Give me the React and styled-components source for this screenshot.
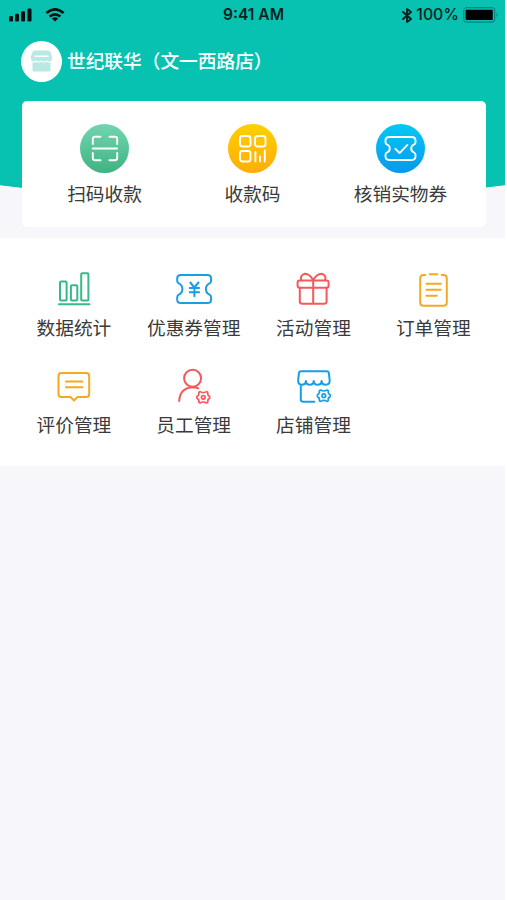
import React from 'react';
import styled, { createGlobalStyle } from 'styled-components';

const GlobalStyle = createGlobalStyle`
  * { box-sizing: border-box; }
  body { margin: 0; background: #fff; }
  svg { display: block; flex: none; }
`;

const cjk = '"Noto Sans CJK SC", sans-serif';

const Screen = styled.main`
  width: 505px;
  height: 900px;
  background: #f6f6fb;
  font-family: ${cjk};
  color: #3a3a3a;
  overflow: hidden;
`;

const Hero = styled.section`
  height: 238px;
  background:
    radial-gradient(ellipse 920px 400px at 252.5px -199px, #07c2b0 99.8%, transparent 100%);
`;

const StatusBar = styled.div`
  height: 30px;
  padding: 0 6px 0 8px;
  display: grid;
  grid-template-columns: 1fr auto 1fr;
  align-items: center;
  font: 600 16px/30px Inter, sans-serif;
  color: #04211e;
`;

const StatusGroup = styled.div`
  display: flex;
  align-items: center;
  gap: ${(p) => p.$gap}px;
  justify-content: ${(p) => (p.$end ? 'flex-end' : 'flex-start')};
`;

const StatusText = styled.span`
  font-size: ${(p) => p.$size}px;
  font-weight: ${(p) => p.$weight};
`;

const StoreHeader = styled.header`
  height: 71px;
  padding: 11px 0 0 21px;
  display: flex;
  align-items: flex-start;
  gap: 5px;
`;

const Avatar = styled.div`
  width: 41px;
  height: 41px;
  border-radius: 50%;
  background: #fff;
  display: grid;
  place-items: center;
`;

const StoreName = styled.h1`
  margin: 0;
  font-size: 18.7px;
  font-weight: 500;
  line-height: 37px;
  color: #fff;
`;

const ActionCard = styled.nav`
  width: 464px;
  height: 126px;
  margin-left: 22px;
  padding: 23px 11px 0 8.5px;
  border-radius: 5px;
  background: #fff;
  display: grid;
  grid-template-columns: repeat(3, 148px);
`;

const Item = styled.div`
  display: flex;
  flex-direction: column;
  align-items: center;
`;

const Disc = styled.div`
  width: 49px;
  height: 49px;
  border-radius: 50%;
  background: linear-gradient(${(p) => p.$from}, ${(p) => p.$to});
`;

const Label = styled.span`
  margin-top: ${(p) => p.$top}px;
  font-size: 18.7px;
  line-height: 26px;
  white-space: nowrap;
`;

const MenuPanel = styled.nav`
  height: 227.5px;
  padding: 32px 0 0 14px;
  background: #fff;
  display: grid;
  grid-template-columns: repeat(4, 119.8px);
  grid-auto-rows: 96.8px;
  align-content: start;
`;

const Stroke = styled.svg`
  fill: none;
  stroke: ${(p) => p.$color};
  stroke-width: ${(p) => p.$width || 2};
  stroke-linecap: round;
  stroke-linejoin: round;
`;

const LineIcon = ({ color, children }) => (
  <Stroke $color={color} width="40" height="40" viewBox="0 0 40 40">{children}</Stroke>
);

const DiscIcon = ({ children }) => (
  <Stroke $color="#fff" $width={1.9} width="49" height="49" viewBox="0 0 49 49">{children}</Stroke>
);

const Gear = ({ x, y }) => (
  <g transform={`translate(${x} ${y})`} strokeWidth="1.7">
    <path d="M-3.200-5.700Q0-3.700 3.200-5.700L4.400-5Q4-1.900 6.400-.9V.9Q4 1.900 4.400 5L3.200 5.700Q0 3.700-3.200 5.700L-4.400 5Q-4 1.900-6.400.9V-.9Q-4-1.900-4.400-5Z" />
    <circle r="1.800" />
  </g>
);

const ScanIcon = () => (
  <DiscIcon>
    <path d="M12.8 20v-5q0-2.2 2.2-2.2h5.5M29.5 12.8H35q2.2 0 2.2 2.2v5M12.8 29v5q0 2.2 2.2 2.2h5.5M29.500 36.200H35q2.200 0 2.200-2.200v-5M12.800 24.500h24.400" />
  </DiscIcon>
);

const CodeIcon = () => (
  <DiscIcon>
    <rect x="12" y="12" width="10.500" height="10.500" rx="2.500" />
    <rect x="27" y="12" width="10.500" height="10.500" rx="2.500" />
    <rect x="12" y="27" width="10.500" height="10.500" rx="2.500" />
    <path d="M27.400 28v9.500M32 32.500v5M36.800 26.500v11" />
  </DiscIcon>
);

const VerifyIcon = () => (
  <DiscIcon>
    <path d="M13.200 13h22.600q3.700 0 3.700 3.700v1.500q0 1.600-1.500 2.300-2.800 1.200-2.800 4t2.800 4q1.500.7 1.500 2.300v1.500q0 3.700-3.700 3.700H13.200q-3.700 0-3.700-3.700v-1.500q0-1.600 1.500-2.300 2.800-1.200 2.800-4t-2.800-4q-1.500-.7-1.500-2.300v-1.500Q9.500 13 13.200 13Z" />
    <path d="m19.400 24.800 4.200 4.300 7.800-8.200" />
  </DiscIcon>
);

const StatsIcon = () => (
  <LineIcon color="#37ba87">
    <rect x="6" y="11.500" width="6.600" height="19" rx="1" />
    <rect x="16.900" y="15.300" width="6.400" height="15.200" rx="1" />
    <rect x="27.200" y="3.300" width="7.200" height="27.200" rx="1" />
    <path d="M5 34.300h30.500" />
  </LineIcon>
);

const CouponIcon = () => (
  <LineIcon color="#189fe3">
    <path d="M6.800 5h26.700q3.600 0 3.600 3.600v2.200q0 1.700-1.600 2.500-3.600 1.800-3.600 5.700t3.600 5.700q1.600.8 1.600 2.500v2.200q0 3.600-3.600 3.600H6.800q-3.600 0-3.600-3.600v-2.200q0-1.700 1.600-2.500 3.600-1.800 3.600-5.700t-3.600-5.700q-1.600-.8-1.600-2.500V8.600Q3.200 5 6.800 5Z" />
    <path d="m16.300 12.500 4.100 5 4.100-5M20.400 17.500V26.300M15.700 18h9.400M15.700 22.300h9.400" />
  </LineIcon>
);

const GiftIcon = () => (
  <LineIcon color="#f5585d">
    <rect x="4.600" y="10.400" width="31" height="7.400" rx="2" />
    <path d="M6.800 17.800v13.500q0 2.500 2.500 2.500h21.800q2.500 0 2.500-2.500V17.800M20.200 10.400v23.400M20.200 10.400Q17 4 11.800 3.800 6.600 5.500 8.300 10.200M20.200 10.400q3.200-6.400 8.400-6.600 5.200 1.700 3.500 6.400" />
  </LineIcon>
);

const OrderIcon = () => (
  <LineIcon color="#f6a91f">
    <path d="M12.300 5H10.600Q7.200 5 7.200 8.400v24q0 3.300 3.400 3.300h19.800q3.400 0 3.400-3.300v-24q0-3.400-3.400-3.400h-1.700M16.700 4.200h7.700M13.500 13.700h14.300M13.500 19.700h14.300M13.500 25.700h10.200" />
  </LineIcon>
);

const ReviewIcon = () => (
  <LineIcon color="#f6a91f">
    <path d="M7.500 6h24.700q3 0 3 3v18q0 3-3 3h-8.700L20 33.500 16.500 30h-9q-3 0-3-3V9q0-3 3-3ZM12 14.400h16.300M12 20.300h16.300" />
  </LineIcon>
);

const StaffIcon = () => (
  <LineIcon color="#f5585d">
    <circle cx="18.600" cy="11.300" r="8.500" />
    <path d="M5.200 34Q5.900 21 18.600 20.200q3.200 0 5.600 1.200" />
    <Gear x={29.300} y={30.300} />
  </LineIcon>
);

const ShopIcon = () => (
  <LineIcon color="#189fe3">
    <path d="M8 4.300h25.700q2 0 2.200 2l.8 7.300q0 4.200-4 4.200-3.800 0-4.100-3.700-.3 3.700-3.900 3.700t-4-3.700q-.3 3.700-3.900 3.700t-3.900-3.700q-.3 3.700-4 3.700-3.800 0-3.800-4.200l.8-7.300q.2-2 2.100-2ZM7.800 17.800v14.500q0 2.500 2.500 2.500h11" />
    <Gear x={30.800} y={28.700} />
  </LineIcon>
);

const SignalIcon = () => (
  <svg width="24" height="14" viewBox="0 0 24 14" fill="#04100f">
    <rect x="1" y="8" width="4" height="5.500" rx="1.200" />
    <rect x="7" y="5.800" width="4" height="7.700" rx="1.200" />
    <rect x="13" y="3.300" width="4" height="10.200" rx="1.200" />
    <rect x="19.500" y=".5" width="4" height="13" rx="1.200" />
  </svg>
);

const WifiIcon = () => (
  <Stroke $color="#04100f" $width={2.7} width="20" height="14" viewBox="0 0 20 14">
    <path strokeLinecap="butt" d="M1.400 5.100Q10-2.400 18.600 5.100M4.600 8.500q5.400-4.400 10.800 0" />
    <path fill="#04100f" stroke="none" d="M6.800 10.400q3.200-2.200 6.400 0L10 13.500Z" />
  </Stroke>
);

const BluetoothIcon = () => (
  <Stroke $color="#04211e" $width={1.9} width="10" height="15" viewBox="0 0 10 15">
    <path d="m1 4 8 7-4 3V1l4 3-8 7" />
  </Stroke>
);

const BatteryIcon = () => (
  <svg width="36" height="16" viewBox="0 0 36 16">
    <rect x=".7" y=".7" width="31" height="14.400" rx="3" fill="none" stroke="#06877b" strokeWidth="1.200" />
    <rect x="2.600" y="2.700" width="27.200" height="10.400" rx="1" fill="#000" />
    <path d="M33.500 5.500q2.300 2.400 0 4.800Z" fill="#06877b" />
  </svg>
);

const StoreAvatarIcon = () => (
  <svg width="23" height="23" viewBox="0 0 23 23">
    <path fill="#b8eae3" d="M5 .5h13q2 0 2.600 1.700L22 6.200v3q0 2.300-2.300 2.300t-2.800-1.300q-1 1.300-2.700 1.300t-2.700-1.300q-1 1.300-2.700 1.300t-2.700-1.300q-1 1.300-2.800 1.300Q1 11.500 1 9.200v-3l1.400-4Q3 .5 5 .5Z" />
    <path fill="#b8eae3" d="M2.500 12.600q2 .3 3.600-.9 2.700 1.700 5.400 0 2.700 1.700 5.400 0 1.600 1.200 3.600.9v7.600q0 1.300-1.300 1.300H3.800q-1.300 0-1.300-1.300Z" />
    <path stroke="#fff" strokeWidth="1.400" strokeLinecap="round" d="M5 6.300h13" />
  </svg>
);

const actions = [
  { label: '扫码收款', from: '#72d5b0', to: '#40b381', Icon: ScanIcon },
  { label: '收款码', from: '#ffd000', to: '#ffad09', Icon: CodeIcon },
  { label: '核销实物券', from: '#05c8f5', to: '#0799ec', Icon: VerifyIcon },
];

const menu = [
  { label: '数据统计', Icon: StatsIcon },
  { label: '优惠券管理', Icon: CouponIcon },
  { label: '活动管理', Icon: GiftIcon },
  { label: '订单管理', Icon: OrderIcon },
  { label: '评价管理', Icon: ReviewIcon },
  { label: '员工管理', Icon: StaffIcon },
  { label: '店铺管理', Icon: ShopIcon },
];

export default function App() {
  return (
    <Screen>
      <GlobalStyle />
      <Hero>
        <StatusBar>
          <StatusGroup $gap={13}>
            <SignalIcon />
            <WifiIcon />
          </StatusGroup>
          <StatusText $size={15.6} $weight={600}>9:41 AM</StatusText>
          <StatusGroup $gap={4} $end>
            <BluetoothIcon />
            <StatusText $size={15.8} $weight={500}>100%</StatusText>
            <BatteryIcon />
          </StatusGroup>
        </StatusBar>
        <StoreHeader>
          <Avatar><StoreAvatarIcon /></Avatar>
          <StoreName>世纪联华（文一西路店）</StoreName>
        </StoreHeader>
        <ActionCard>
          {actions.map(({ label, from, to, Icon }) => (
            <Item key={label}>
              <Disc $from={from} $to={to}><Icon /></Disc>
              <Label $top={7}>{label}</Label>
            </Item>
          ))}
        </ActionCard>
      </Hero>
      <MenuPanel>
        {menu.map(({ label, Icon }) => (
          <Item key={label}>
            <Icon />
            <Label $top={4}>{label}</Label>
          </Item>
        ))}
      </MenuPanel>
    </Screen>
  );
}
